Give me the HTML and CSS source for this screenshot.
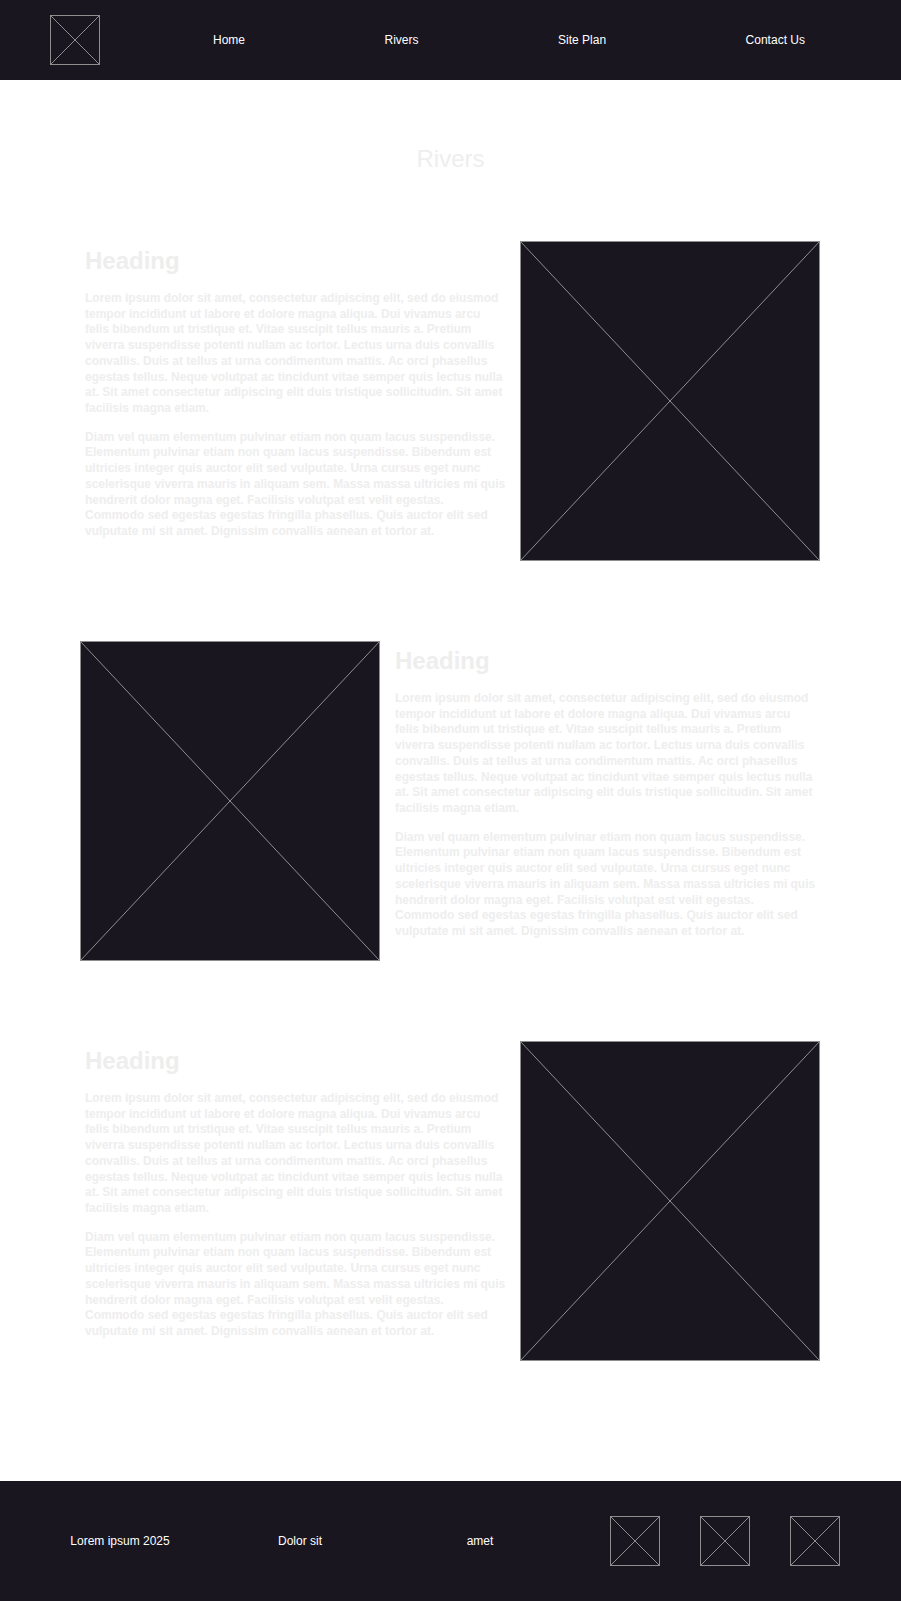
FILE: index.html
```html
<!DOCTYPE html>
<html lang="en">
<head>
<meta charset="utf-8">
<title>Rivers</title>
<link rel="stylesheet" href="styles.css">
</head>
<body>
<header class="site-header">
  <div class="logo">
    <svg class="ph-svg" width="50" height="50" viewBox="0 0 50 50"><rect x="0.5" y="0.5" width="49" height="49"/><line x1="0" y1="0" x2="50" y2="50"/><line x1="50" y1="0" x2="0" y2="50"/></svg>
  </div>
  <nav class="nav">
    <a class="nav-link" href="#">Home</a>
    <a class="nav-link" href="#">Rivers</a>
    <a class="nav-link" href="#">Site Plan</a>
    <a class="nav-link" href="#">Contact Us</a>
  </nav>
</header>

<main class="main">
  <h1 class="page-title">Rivers</h1>

  <section class="feature">
    <div class="feature-text">
      <h2 class="feature-heading">Heading</h2>
      <p class="feature-p">Lorem ipsum dolor sit amet, consectetur adipiscing elit, sed do eiusmod tempor incididunt ut labore et dolore magna aliqua. Dui vivamus arcu felis bibendum ut tristique et. Vitae suscipit tellus mauris a. Pretium viverra suspendisse potenti nullam ac tortor. Lectus urna duis convallis convallis. Duis at tellus at urna condimentum mattis. Ac orci phasellus egestas tellus. Neque volutpat ac tincidunt vitae semper quis lectus nulla at. Sit amet consectetur adipiscing elit duis tristique sollicitudin. Sit amet facilisis magna etiam.</p>
      <p class="feature-p">Diam vel quam elementum pulvinar etiam non quam lacus suspendisse. Elementum pulvinar etiam non quam lacus suspendisse. Bibendum est ultricies integer quis auctor elit sed vulputate. Urna cursus eget nunc scelerisque viverra mauris in aliquam sem. Massa massa ultricies mi quis hendrerit dolor magna eget. Facilisis volutpat est velit egestas. Commodo sed egestas egestas fringilla phasellus. Quis auctor elit sed vulputate mi sit amet. Dignissim convallis aenean et tortor at.</p>
    </div>
    <div class="image-ph">
      <svg class="ph-svg" width="300" height="320" viewBox="0 0 300 320"><rect x="0.5" y="0.5" width="299" height="319"/><line x1="0" y1="0" x2="300" y2="320"/><line x1="300" y1="0" x2="0" y2="320"/></svg>
    </div>
  </section>

  <section class="feature">
    <div class="image-ph">
      <svg class="ph-svg" width="300" height="320" viewBox="0 0 300 320"><rect x="0.5" y="0.5" width="299" height="319"/><line x1="0" y1="0" x2="300" y2="320"/><line x1="300" y1="0" x2="0" y2="320"/></svg>
    </div>
    <div class="feature-text">
      <h2 class="feature-heading">Heading</h2>
      <p class="feature-p">Lorem ipsum dolor sit amet, consectetur adipiscing elit, sed do eiusmod tempor incididunt ut labore et dolore magna aliqua. Dui vivamus arcu felis bibendum ut tristique et. Vitae suscipit tellus mauris a. Pretium viverra suspendisse potenti nullam ac tortor. Lectus urna duis convallis convallis. Duis at tellus at urna condimentum mattis. Ac orci phasellus egestas tellus. Neque volutpat ac tincidunt vitae semper quis lectus nulla at. Sit amet consectetur adipiscing elit duis tristique sollicitudin. Sit amet facilisis magna etiam.</p>
      <p class="feature-p">Diam vel quam elementum pulvinar etiam non quam lacus suspendisse. Elementum pulvinar etiam non quam lacus suspendisse. Bibendum est ultricies integer quis auctor elit sed vulputate. Urna cursus eget nunc scelerisque viverra mauris in aliquam sem. Massa massa ultricies mi quis hendrerit dolor magna eget. Facilisis volutpat est velit egestas. Commodo sed egestas egestas fringilla phasellus. Quis auctor elit sed vulputate mi sit amet. Dignissim convallis aenean et tortor at.</p>
    </div>
  </section>

  <section class="feature">
    <div class="feature-text">
      <h2 class="feature-heading">Heading</h2>
      <p class="feature-p">Lorem ipsum dolor sit amet, consectetur adipiscing elit, sed do eiusmod tempor incididunt ut labore et dolore magna aliqua. Dui vivamus arcu felis bibendum ut tristique et. Vitae suscipit tellus mauris a. Pretium viverra suspendisse potenti nullam ac tortor. Lectus urna duis convallis convallis. Duis at tellus at urna condimentum mattis. Ac orci phasellus egestas tellus. Neque volutpat ac tincidunt vitae semper quis lectus nulla at. Sit amet consectetur adipiscing elit duis tristique sollicitudin. Sit amet facilisis magna etiam.</p>
      <p class="feature-p">Diam vel quam elementum pulvinar etiam non quam lacus suspendisse. Elementum pulvinar etiam non quam lacus suspendisse. Bibendum est ultricies integer quis auctor elit sed vulputate. Urna cursus eget nunc scelerisque viverra mauris in aliquam sem. Massa massa ultricies mi quis hendrerit dolor magna eget. Facilisis volutpat est velit egestas. Commodo sed egestas egestas fringilla phasellus. Quis auctor elit sed vulputate mi sit amet. Dignissim convallis aenean et tortor at.</p>
    </div>
    <div class="image-ph">
      <svg class="ph-svg" width="300" height="320" viewBox="0 0 300 320"><rect x="0.5" y="0.5" width="299" height="319"/><line x1="0" y1="0" x2="300" y2="320"/><line x1="300" y1="0" x2="0" y2="320"/></svg>
    </div>
  </section>
</main>

<footer class="site-footer">
  <div class="footer-item">Lorem ipsum 2025</div>
  <div class="footer-item">Dolor sit</div>
  <div class="footer-item">amet</div>
  <div class="socials">
    <svg class="ph-svg" width="50" height="50" viewBox="0 0 50 50"><rect x="0.5" y="0.5" width="49" height="49"/><line x1="0" y1="0" x2="50" y2="50"/><line x1="50" y1="0" x2="0" y2="50"/></svg>
    <svg class="ph-svg" width="50" height="50" viewBox="0 0 50 50"><rect x="0.5" y="0.5" width="49" height="49"/><line x1="0" y1="0" x2="50" y2="50"/><line x1="50" y1="0" x2="0" y2="50"/></svg>
    <svg class="ph-svg" width="50" height="50" viewBox="0 0 50 50"><rect x="0.5" y="0.5" width="49" height="49"/><line x1="0" y1="0" x2="50" y2="50"/><line x1="50" y1="0" x2="0" y2="50"/></svg>
  </div>
</footer>
</body>
</html>
```

FILE: styles.css
```css
* {
  box-sizing: border-box;
}

html, body {
  margin: 0;
  padding: 0;
  background: #ffffff;
}

body {
  font-family: "Liberation Sans", Arial, sans-serif;
  color: #eeeeee;
}

.ph-svg {
  display: block;
}

.ph-svg rect {
  fill: #19161f;
  stroke: #8e8e8e;
  stroke-width: 1;
}

.ph-svg line {
  stroke: #8e8e8e;
  stroke-width: 1;
}

/* Header */
.site-header {
  height: 80px;
  background: #19161f;
  display: flex;
  align-items: center;
  padding: 0 96px 0 50px;
}

.logo {
  width: 50px;
  height: 50px;
  flex: none;
}

.nav {
  flex: 1;
  margin-left: 113px;
  display: flex;
  justify-content: space-between;
  align-items: center;
}

.nav-link {
  color: #ffffff;
  text-decoration: none;
  font-size: 12px;
  line-height: 14px;
}

/* Main */
.main {
  padding-top: 65px;
  padding-bottom: 120px;
  display: flex;
  flex-direction: column;
  gap: 80px;
}

.page-title {
  margin: 0 0 -12px;
  text-align: center;
  font-size: 24px;
  line-height: 28px;
  font-weight: normal;
  color: #eeeeee;
}

.feature {
  display: flex;
  gap: 10px;
  padding: 0 81px 0 80px;
}

.feature-text {
  flex: 1;
  padding: 6px 4px 0 5px;
}

.feature-heading {
  margin: 0 0 16px;
  font-size: 24px;
  line-height: 28px;
  font-weight: bold;
  color: #eeeeee;
}

.feature-p {
  margin: 0 0 13px;
  font-size: 12px;
  line-height: 1.31;
  font-weight: bold;
  color: #eeeeee;
}

.image-ph {
  width: 300px;
  height: 320px;
  flex: none;
}

/* Footer */
.site-footer {
  height: 120px;
  background: #19161f;
  display: flex;
  align-items: center;
  padding-left: 30px;
}

.footer-item {
  width: 180px;
  text-align: center;
  color: #ffffff;
  font-size: 12px;
  line-height: 14px;
}

.socials {
  display: flex;
  gap: 40px;
  margin-left: 40px;
}
```
